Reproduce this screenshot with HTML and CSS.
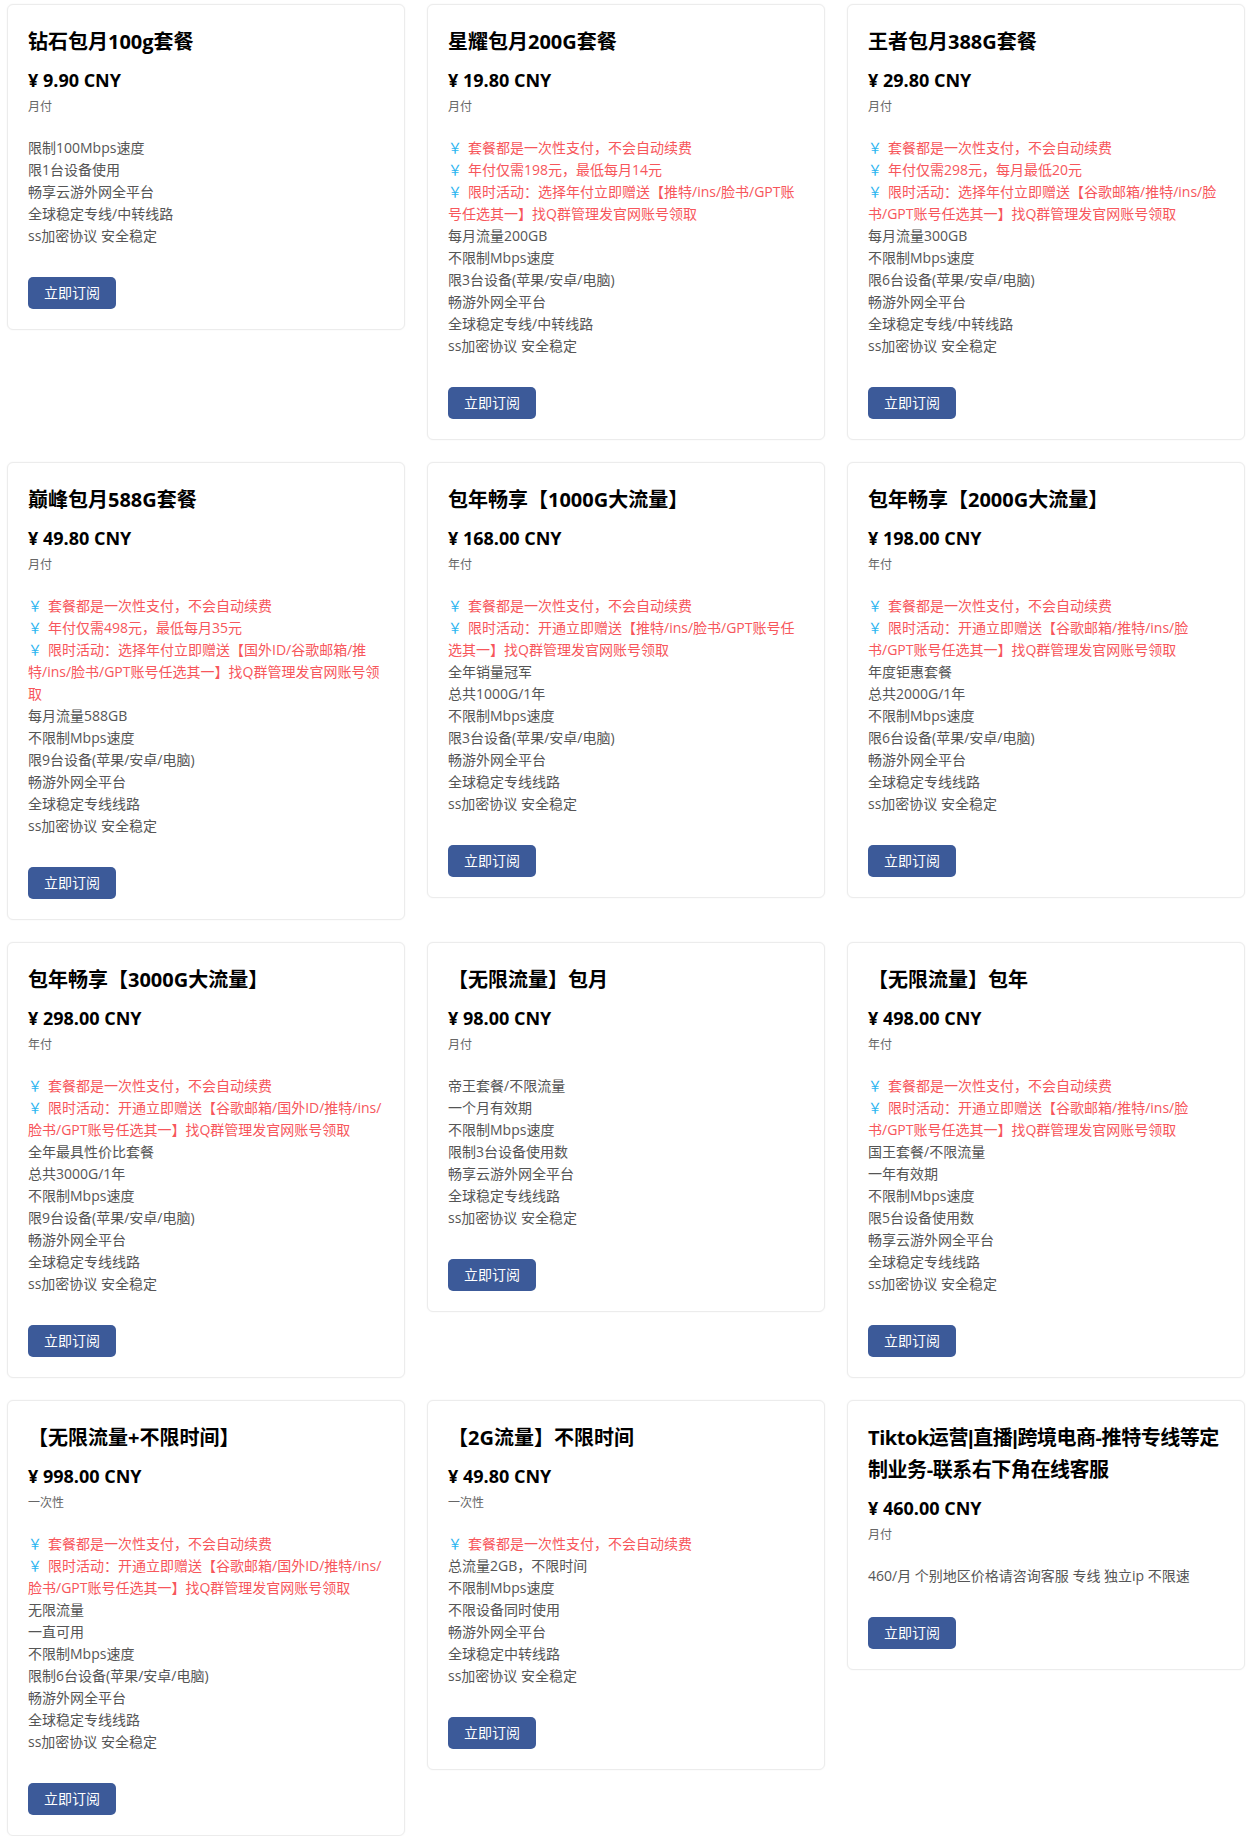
FILE: index.html
```html
<!DOCTYPE html>
<html lang="zh-CN">
<head>
<meta charset="utf-8">
<title>套餐</title>
<link rel="stylesheet" href="styles.css">
</head>
<body>
<main class="plans">

  <div class="card">
    <h3 class="card-title">钻石包月100g套餐</h3>
    <div class="price">¥ 9.90 CNY</div>
    <div class="period">月付</div>
    <ul class="features">
      <li>限制100Mbps速度</li>
      <li>限1台设备使用</li>
      <li>畅享云游外网全平台</li>
      <li>全球稳定专线/中转线路</li>
      <li>ss加密协议 安全稳定</li>
    </ul>
    <a class="btn" href="#">立即订阅</a>
  </div>

  <div class="card">
    <h3 class="card-title">星耀包月200G套餐</h3>
    <div class="price">¥ 19.80 CNY</div>
    <div class="period">月付</div>
    <ul class="features">
      <li class="promo"><span class="yen">￥</span>套餐都是一次性支付，不会自动续费</li>
      <li class="promo"><span class="yen">￥</span>年付仅需198元，最低每月14元</li>
      <li class="promo"><span class="yen">￥</span>限时活动：选择年付立即赠送【推特/ins/脸书/GPT账号任选其一】找Q群管理发官网账号领取</li>
      <li>每月流量200GB</li>
      <li>不限制Mbps速度</li>
      <li>限3台设备(苹果/安卓/电脑)</li>
      <li>畅游外网全平台</li>
      <li>全球稳定专线/中转线路</li>
      <li>ss加密协议 安全稳定</li>
    </ul>
    <a class="btn" href="#">立即订阅</a>
  </div>

  <div class="card">
    <h3 class="card-title">王者包月388G套餐</h3>
    <div class="price">¥ 29.80 CNY</div>
    <div class="period">月付</div>
    <ul class="features">
      <li class="promo"><span class="yen">￥</span>套餐都是一次性支付，不会自动续费</li>
      <li class="promo"><span class="yen">￥</span>年付仅需298元，每月最低20元</li>
      <li class="promo"><span class="yen">￥</span>限时活动：选择年付立即赠送【谷歌邮箱/推特/ins/脸书/GPT账号任选其一】找Q群管理发官网账号领取</li>
      <li>每月流量300GB</li>
      <li>不限制Mbps速度</li>
      <li>限6台设备(苹果/安卓/电脑)</li>
      <li>畅游外网全平台</li>
      <li>全球稳定专线/中转线路</li>
      <li>ss加密协议 安全稳定</li>
    </ul>
    <a class="btn" href="#">立即订阅</a>
  </div>

  <div class="card">
    <h3 class="card-title">巅峰包月588G套餐</h3>
    <div class="price">¥ 49.80 CNY</div>
    <div class="period">月付</div>
    <ul class="features">
      <li class="promo"><span class="yen">￥</span>套餐都是一次性支付，不会自动续费</li>
      <li class="promo"><span class="yen">￥</span>年付仅需498元，最低每月35元</li>
      <li class="promo"><span class="yen">￥</span>限时活动：选择年付立即赠送【国外ID/谷歌邮箱/推特/ins/脸书/GPT账号任选其一】找Q群管理发官网账号领取</li>
      <li>每月流量588GB</li>
      <li>不限制Mbps速度</li>
      <li>限9台设备(苹果/安卓/电脑)</li>
      <li>畅游外网全平台</li>
      <li>全球稳定专线线路</li>
      <li>ss加密协议 安全稳定</li>
    </ul>
    <a class="btn" href="#">立即订阅</a>
  </div>

  <div class="card">
    <h3 class="card-title">包年畅享【1000G大流量】</h3>
    <div class="price">¥ 168.00 CNY</div>
    <div class="period">年付</div>
    <ul class="features">
      <li class="promo"><span class="yen">￥</span>套餐都是一次性支付，不会自动续费</li>
      <li class="promo"><span class="yen">￥</span>限时活动：开通立即赠送【推特/ins/脸书/GPT账号任选其一】找Q群管理发官网账号领取</li>
      <li>全年销量冠军</li>
      <li>总共1000G/1年</li>
      <li>不限制Mbps速度</li>
      <li>限3台设备(苹果/安卓/电脑)</li>
      <li>畅游外网全平台</li>
      <li>全球稳定专线线路</li>
      <li>ss加密协议 安全稳定</li>
    </ul>
    <a class="btn" href="#">立即订阅</a>
  </div>

  <div class="card">
    <h3 class="card-title">包年畅享【2000G大流量】</h3>
    <div class="price">¥ 198.00 CNY</div>
    <div class="period">年付</div>
    <ul class="features">
      <li class="promo"><span class="yen">￥</span>套餐都是一次性支付，不会自动续费</li>
      <li class="promo"><span class="yen">￥</span>限时活动：开通立即赠送【谷歌邮箱/推特/ins/脸书/GPT账号任选其一】找Q群管理发官网账号领取</li>
      <li>年度钜惠套餐</li>
      <li>总共2000G/1年</li>
      <li>不限制Mbps速度</li>
      <li>限6台设备(苹果/安卓/电脑)</li>
      <li>畅游外网全平台</li>
      <li>全球稳定专线线路</li>
      <li>ss加密协议 安全稳定</li>
    </ul>
    <a class="btn" href="#">立即订阅</a>
  </div>

  <div class="card">
    <h3 class="card-title">包年畅享【3000G大流量】</h3>
    <div class="price">¥ 298.00 CNY</div>
    <div class="period">年付</div>
    <ul class="features">
      <li class="promo"><span class="yen">￥</span>套餐都是一次性支付，不会自动续费</li>
      <li class="promo"><span class="yen">￥</span>限时活动：开通立即赠送【谷歌邮箱/国外ID/推特/ins/脸书/GPT账号任选其一】找Q群管理发官网账号领取</li>
      <li>全年最具性价比套餐</li>
      <li>总共3000G/1年</li>
      <li>不限制Mbps速度</li>
      <li>限9台设备(苹果/安卓/电脑)</li>
      <li>畅游外网全平台</li>
      <li>全球稳定专线线路</li>
      <li>ss加密协议 安全稳定</li>
    </ul>
    <a class="btn" href="#">立即订阅</a>
  </div>

  <div class="card">
    <h3 class="card-title">【无限流量】包月</h3>
    <div class="price">¥ 98.00 CNY</div>
    <div class="period">月付</div>
    <ul class="features">
      <li>帝王套餐/不限流量</li>
      <li>一个月有效期</li>
      <li>不限制Mbps速度</li>
      <li>限制3台设备使用数</li>
      <li>畅享云游外网全平台</li>
      <li>全球稳定专线线路</li>
      <li>ss加密协议 安全稳定</li>
    </ul>
    <a class="btn" href="#">立即订阅</a>
  </div>

  <div class="card">
    <h3 class="card-title">【无限流量】包年</h3>
    <div class="price">¥ 498.00 CNY</div>
    <div class="period">年付</div>
    <ul class="features">
      <li class="promo"><span class="yen">￥</span>套餐都是一次性支付，不会自动续费</li>
      <li class="promo"><span class="yen">￥</span>限时活动：开通立即赠送【谷歌邮箱/推特/ins/脸书/GPT账号任选其一】找Q群管理发官网账号领取</li>
      <li>国王套餐/不限流量</li>
      <li>一年有效期</li>
      <li>不限制Mbps速度</li>
      <li>限5台设备使用数</li>
      <li>畅享云游外网全平台</li>
      <li>全球稳定专线线路</li>
      <li>ss加密协议 安全稳定</li>
    </ul>
    <a class="btn" href="#">立即订阅</a>
  </div>

  <div class="card">
    <h3 class="card-title">【无限流量+不限时间】</h3>
    <div class="price">¥ 998.00 CNY</div>
    <div class="period">一次性</div>
    <ul class="features">
      <li class="promo"><span class="yen">￥</span>套餐都是一次性支付，不会自动续费</li>
      <li class="promo"><span class="yen">￥</span>限时活动：开通立即赠送【谷歌邮箱/国外ID/推特/ins/脸书/GPT账号任选其一】找Q群管理发官网账号领取</li>
      <li>无限流量</li>
      <li>一直可用</li>
      <li>不限制Mbps速度</li>
      <li>限制6台设备(苹果/安卓/电脑)</li>
      <li>畅游外网全平台</li>
      <li>全球稳定专线线路</li>
      <li>ss加密协议 安全稳定</li>
    </ul>
    <a class="btn" href="#">立即订阅</a>
  </div>

  <div class="card">
    <h3 class="card-title">【2G流量】不限时间</h3>
    <div class="price">¥ 49.80 CNY</div>
    <div class="period">一次性</div>
    <ul class="features">
      <li class="promo"><span class="yen">￥</span>套餐都是一次性支付，不会自动续费</li>
      <li>总流量2GB，不限时间</li>
      <li>不限制Mbps速度</li>
      <li>不限设备同时使用</li>
      <li>畅游外网全平台</li>
      <li>全球稳定中转线路</li>
      <li>ss加密协议 安全稳定</li>
    </ul>
    <a class="btn" href="#">立即订阅</a>
  </div>

  <div class="card">
    <h3 class="card-title card-title-tight">Tiktok运营<span class="bar">|</span>直播<span class="bar">|</span>跨境电商-推特专线等定制业务-联系右下角在线客服</h3>
    <div class="price">¥ 460.00 CNY</div>
    <div class="period">月付</div>
    <ul class="features">
      <li>460/月 个别地区价格请咨询客服 专线 独立ip 不限速</li>
    </ul>
    <a class="btn" href="#">立即订阅</a>
  </div>

</main>
</body>
</html>
```

FILE: styles.css
```css
* {
  box-sizing: border-box;
}

html, body {
  margin: 0;
  padding: 0;
  background: #ffffff;
}

body {
  font-family: "Open Sans", "Noto Sans CJK SC", sans-serif;
  color: #333;
}

.plans {
  display: grid;
  grid-template-columns: repeat(3, 398px);
  column-gap: 22px;
  row-gap: 22px;
  align-items: start;
  padding: 4px 7px 0;
}

.card {
  background: #fff;
  border: 1px solid #ececec;
  border-radius: 6px;
  box-shadow: 0 0 2px rgba(0, 0, 0, 0.05);
  padding: 21px 20px 20px;
}

.card-title {
  margin: 0;
  font-size: 20px;
  line-height: 32px;
  font-weight: 700;
  color: #000;
}

.card-title-tight {
  letter-spacing: -0.45px;
}

.card-title .bar {
  font-family: "Liberation Sans", sans-serif;
}

.price {
  margin-top: 8px;
  font-size: 18px;
  line-height: 28px;
  font-weight: 700;
  color: #000;
}

.period {
  margin-top: 4px;
  font-size: 12px;
  line-height: 18px;
  color: #666;
}

.features {
  list-style: none;
  margin: 21px 0 0;
  padding: 0;
  font-size: 14px;
  line-height: 22px;
  color: #555;
}

.features .promo {
  color: #f7565b;
}

.yen {
  color: #2cb5f0;
  margin-right: 6px;
}

.btn {
  display: inline-block;
  margin-top: 30px;
  height: 32px;
  line-height: 32px;
  padding: 0 16px;
  background: #3c5a99;
  color: #fff;
  font-size: 14px;
  border-radius: 5px;
  text-decoration: none;
  vertical-align: top;
}
```
